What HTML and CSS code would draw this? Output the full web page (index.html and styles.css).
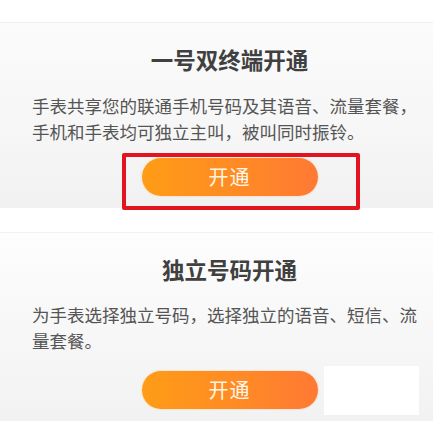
FILE: index.html
```html
<!DOCTYPE html>
<html lang="zh-CN">
<head>
<meta charset="utf-8">
<link rel="stylesheet" href="styles.css">
</head>
<body>
<div class="page">
  <div class="top-gap"></div>
  <section class="card card-first">
    <h2 class="card-title">一号双终端开通</h2>
    <p class="card-desc">手表共享您的联通手机号码及其语音、流量套餐，手机和手表均可独立主叫，被叫同时振铃。</p>
    <div class="btn-row">
      <div class="btn-wrap">
        <button class="btn">开通</button>
        <span class="highlight"></span>
      </div>
    </div>
  </section>
  <div class="mid-gap"></div>
  <section class="card card-second">
    <h2 class="card-title">独立号码开通</h2>
    <p class="card-desc">为手表选择独立号码，选择独立的语音、短信、流量套餐。</p>
    <div class="btn-row">
      <div class="btn-wrap">
        <button class="btn">开通</button>
        <span class="mask"></span>
      </div>
    </div>
  </section>
</div>
</body>
</html>
```
FILE: styles.css
```css
* { box-sizing: border-box; }
html, body {
  margin: 0;
  padding: 0;
  background: #ffffff;
}
body {
  width: 433px;
  height: 421px;
  overflow: hidden;
  font-family: "Noto Sans CJK SC", "Noto Sans", sans-serif;
}
.page {
  display: flex;
  flex-direction: column;
}
.top-gap {
  height: 23px;
  background: #ffffff;
  border-bottom: 1px solid #f0f0f0;
}
.mid-gap {
  height: 25px;
  background: #ffffff;
  border-bottom: 1px solid #f1f1f1;
}
.card {
  padding: 21px 6px 0 32px;
  display: flex;
  flex-direction: column;
}
.card-first {
  height: 185px;
  background: linear-gradient(180deg, #fbfbfb 0%, #f6f6f6 60%, #f1f1f1 100%);
}
.card-second {
  height: 200px;
  background: linear-gradient(180deg, #fdfdfd 0%, #f7f7f7 50%, #f1f1f1 100%);
}
.card-title {
  margin: 0;
  font-size: 22.5px;
  line-height: 30px;
  font-weight: 700;
  color: #404040;
  text-align: center;
}
.card-desc {
  margin: 18px 0 0;
  font-size: 17.5px;
  line-height: 26px;
  color: #555555;
}
.card-first .card-desc { margin-top: 19px; }
.btn-row {
  display: flex;
  justify-content: center;
  margin-top: 13px;
}
.card-second .btn-row { margin-top: 17px; }
.btn-wrap {
  position: relative;
}
.btn {
  display: block;
  width: 176px;
  height: 38px;
  border: none;
  border-radius: 19px;
  background: linear-gradient(90deg, #ff9c16 0%, #ff8a25 55%, #ff7934 100%);
  box-shadow: 0 0 2px rgba(255, 170, 80, 0.6);
  color: #fff6e4;
  font-family: "Noto Sans CJK SC", "Noto Sans", sans-serif;
  font-size: 20px;
  line-height: 38px;
  padding: 0;
  letter-spacing: 1px;
}
.highlight {
  position: absolute;
  left: -20px;
  top: -5px;
  width: 238px;
  height: 57px;
  border: 4px solid #e3131f;
  border-radius: 2px;
}
.mask {
  position: absolute;
  left: 182px;
  top: -5px;
  width: 95px;
  height: 49px;
  background: #ffffff;
}
```
